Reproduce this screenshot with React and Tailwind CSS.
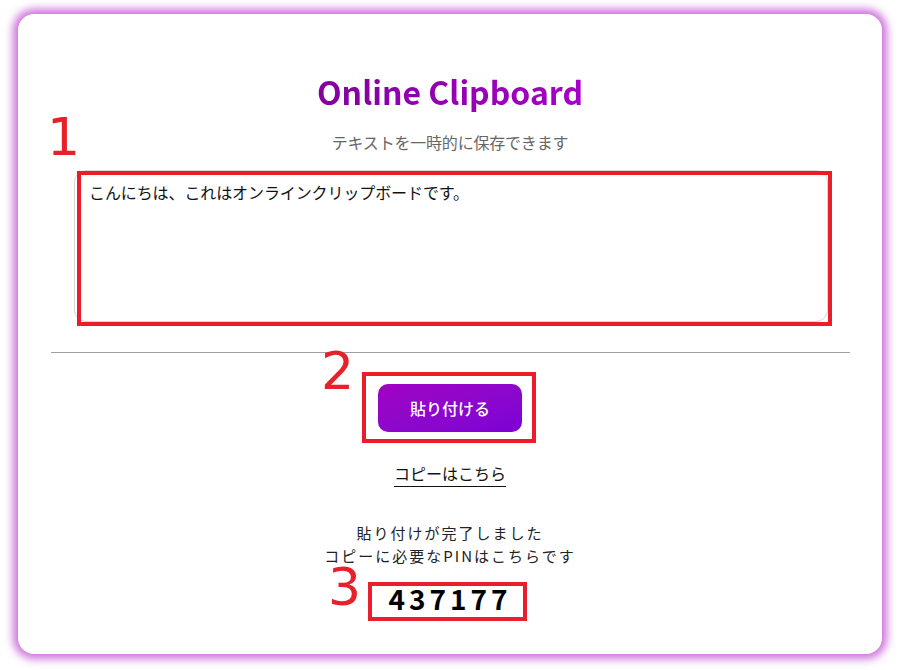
import React from "react";

const jp = { fontFamily: '"Noto Sans CJK JP", "Noto Sans", sans-serif' };

export default function App() {
  return (
    <div className="w-[898px] h-[670px] bg-white pt-[14px] pl-[18px]" style={jp}>
      <div className="relative w-[864px] h-[640px] rounded-[16px] bg-white shadow-[0_0_8px_5px_rgba(196,90,214,0.85)] flex flex-col items-center">
        <h1 className="mt-[53px] h-[48px] leading-[48px] text-[32px] font-bold bg-gradient-to-r from-[#82009e] to-[#a600c6] bg-clip-text text-transparent">
          Online Clipboard
        </h1>
        <p className="mt-[16px] h-[22px] leading-[22px] text-[16px] text-[#666666] tracking-[-0.2px]">
          テキストを一時的に保存できます
        </p>
        <textarea
          className="mt-[17px] w-[754px] h-[152px] ml-[2px] border border-[#d6d6d6] rounded-[12px] px-[14px] py-[9px] text-[16px] tracking-[-0.1px] text-[#111] resize-none outline-none"
          style={jp}
          defaultValue="こんにちは、これはオンラインクリップボードです。"
        />
        <div className="mt-[30px] w-[799px] h-[1px] bg-[#a0a0a0]" />
        <button className="mt-[31px] w-[144px] h-[48px] rounded-[10px] bg-gradient-to-br from-[#a000c2] to-[#7c00d6] text-white text-[16px] font-medium">
          貼り付ける
        </button>
        <a className="mt-[30px] text-[16px] leading-[22px] text-[#111] border-b border-[#111] pb-[2px]">
          コピーはこちら
        </a>
        <div className="mt-[34px] text-[15px] leading-[23px] tracking-[2px] text-[#222] text-center">
          <div>貼り付けが完了しました</div>
          <div>コピーに必要なPINはこちらです</div>
        </div>
        <div className="mt-[13px] text-[28px] leading-[36px] font-bold tracking-[4px] text-black">
          437177
        </div>

        {/* annotations */}
        <div className="absolute left-[29px] top-[97px] text-[52px] leading-none text-[#e8202a]" style={{ fontFamily: '"DejaVu Sans", sans-serif' }}>1</div>
        <div className="absolute left-[59px] top-[157px] w-[755px] h-[155px] border-[4px] border-[#ea1d2b]" />
        <div className="absolute left-[303px] top-[331px] text-[52px] leading-none text-[#e8202a]" style={{ fontFamily: '"DejaVu Sans", sans-serif' }}>2</div>
        <div className="absolute left-[344px] top-[358px] w-[174px] h-[71px] border-[4px] border-[#ea1d2b]" />
        <div className="absolute left-[310px] top-[547px] text-[52px] leading-none text-[#e8202a]" style={{ fontFamily: '"DejaVu Sans", sans-serif' }}>3</div>
        <div className="absolute left-[350px] top-[568px] w-[159px] h-[39px] border-[4px] border-[#ea1d2b]" />
      </div>
    </div>
  );
}
